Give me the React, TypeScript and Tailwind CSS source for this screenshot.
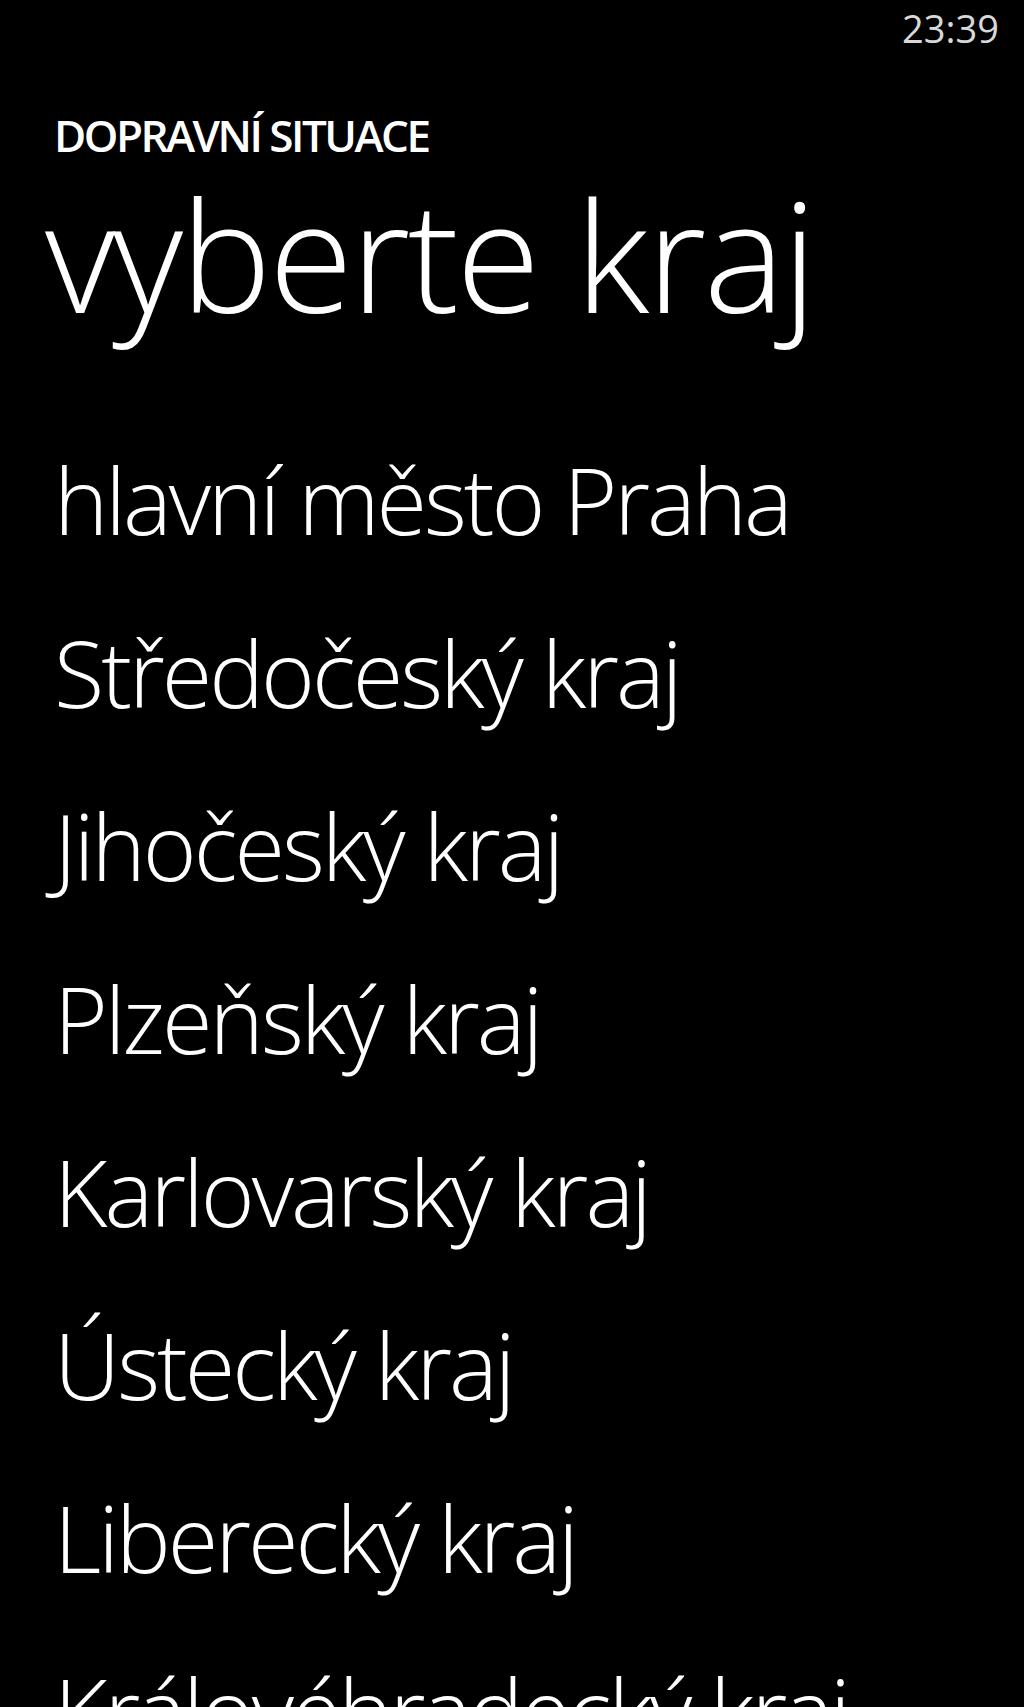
const regions = [
  "hlavní město Praha",
  "Středočeský kraj",
  "Jihočeský kraj",
  "Plzeňský kraj",
  "Karlovarský kraj",
  "Ústecký kraj",
  "Liberecký kraj",
  "Královéhradecký kraj",
];

export default function App() {
  return (
    <div className="h-[1707px] w-[1024px] overflow-hidden bg-black text-white font-['Open_Sans',sans-serif]">
      {/* status bar */}
      <div className="flex justify-end pr-[25px] pt-[4px] h-[107px]">
        <span className="text-[38px] leading-[48px] text-[#d8d8d8]">23:39</span>
      </div>

      {/* page header */}
      <div className="pl-[54px] text-[44px] leading-[56px] font-semibold tracking-[-2.5px]">
        DOPRAVNÍ SITUACE
      </div>
      <h1 className="mt-[11px] pl-[45px] text-[153px] leading-[160px] font-light tracking-[-2.5px]">
        vyberte kraj
      </h1>

      {/* region list */}
      <ul className="mt-[79px] flex flex-col pl-[54px]">
        {regions.map((name) => (
          <li key={name} className="text-[92px] leading-[173px] font-light tracking-[-3px] whitespace-nowrap">
            {name}
          </li>
        ))}
      </ul>
    </div>
  );
}
